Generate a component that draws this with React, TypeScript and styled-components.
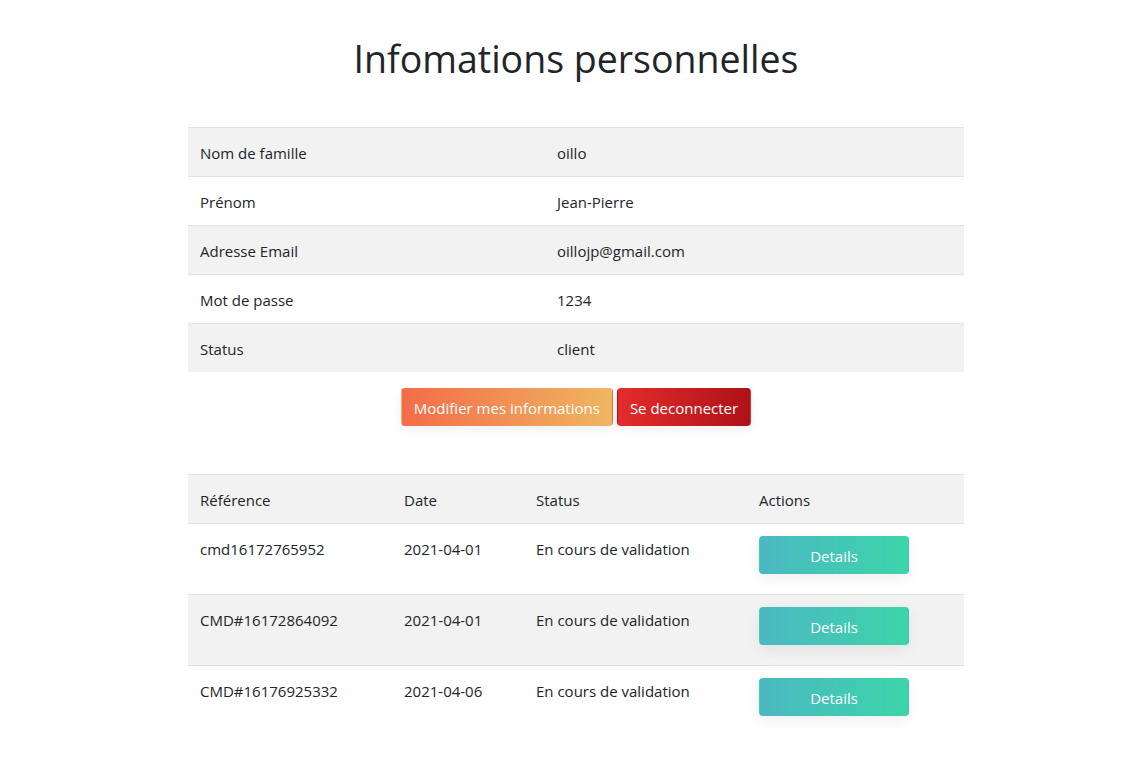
import React from "react";
import styled, { createGlobalStyle } from "styled-components";

const Global = createGlobalStyle`
  html, body { margin: 0; padding: 0; background: #fff; }
  body {
    font-family: "Open Sans", "Noto Sans", sans-serif;
    font-size: 15px;
    line-height: 24px;
    color: #212529;
  }
  * { box-sizing: border-box; }
`;

const Page = styled.div`
  width: 776px;
  margin-left: 188px;
  padding-top: 36px;
  padding-bottom: 40px;
`;

const Title = styled.h1`
  margin: 0 0 46px;
  font-size: 37.5px;
  font-weight: 400;
  line-height: 45px;
  text-align: center;
`;

const Table = styled.table`
  width: 100%;
  border-collapse: collapse;
`;

const Row = styled.tr<{ $striped?: boolean }>`
  background: ${(p) => (p.$striped ? "#f2f2f2" : "#fff")};
`;

const Cell = styled.td<{ $w?: number }>`
  padding: 13px 12px 11px;
  border-top: 1px solid #dee2e6;
  vertical-align: top;
  text-align: left;
  font-weight: 400;
  ${(p) => (p.$w ? `width: ${p.$w}px;` : "")}
`;

const ActionCell = styled(Cell)`
  padding: 12px;
`;

const Buttons = styled.div`
  display: flex;
  justify-content: center;
  gap: 4px;
  margin-top: 16px;
  margin-bottom: 48px;
`;

const Btn = styled.button<{ $from: string; $to: string }>`
  height: 38px;
  padding: 1px 12px 0;
  border: 1px solid transparent;
  border-radius: 4px;
  font-family: inherit;
  font-size: 15px;
  color: #fff;
  background: linear-gradient(to right, ${(p) => p.$from}, ${(p) => p.$to});
  box-shadow: 0 4px 12px rgba(0, 0, 0, 0.06);
  cursor: pointer;
`;

const DetailsBtn = styled(Btn)`
  width: 150px;
  margin-bottom: 8px;
  box-shadow: 0 4px 14px rgba(0, 0, 0, 0.07);
`;

const info = [
  ["Nom de famille", "oillo"],
  ["Prénom", "Jean-Pierre"],
  ["Adresse Email", "oillojp@gmail.com"],
  ["Mot de passe", "1234"],
  ["Status", "client"],
];

const orders = [
  ["cmd16172765952", "2021-04-01", "En cours de validation"],
  ["CMD#16172864092", "2021-04-01", "En cours de validation"],
  ["CMD#16176925332", "2021-04-06", "En cours de validation"],
];

export default function App() {
  return (
    <>
      <Global />
      <Page>
        <Title>Infomations personnelles</Title>
        <Table>
          <tbody>
            {info.map(([k, v], i) => (
              <Row key={k} $striped={i % 2 === 0}>
                <Cell $w={357}>{k}</Cell>
                <Cell>{v}</Cell>
              </Row>
            ))}
          </tbody>
        </Table>
        <Buttons>
          <Btn $from="#f46c48" $to="#efb661">Modifier mes informations</Btn>
          <Btn $from="#e42c2b" $to="#ae1218">Se deconnecter</Btn>
        </Buttons>
        <Table>
          <tbody>
            <Row $striped>
              <Cell $w={204}>Référence</Cell>
              <Cell $w={132}>Date</Cell>
              <Cell $w={223}>Status</Cell>
              <Cell>Actions</Cell>
            </Row>
            {orders.map(([r, d, s], i) => (
              <Row key={r} $striped={i % 2 === 1}>
                <Cell>{r}</Cell>
                <Cell>{d}</Cell>
                <Cell>{s}</Cell>
                <ActionCell>
                  <DetailsBtn $from="#4bb8c2" $to="#3cd5aa">Details</DetailsBtn>
                </ActionCell>
              </Row>
            ))}
          </tbody>
        </Table>
      </Page>
    </>
  );
}
